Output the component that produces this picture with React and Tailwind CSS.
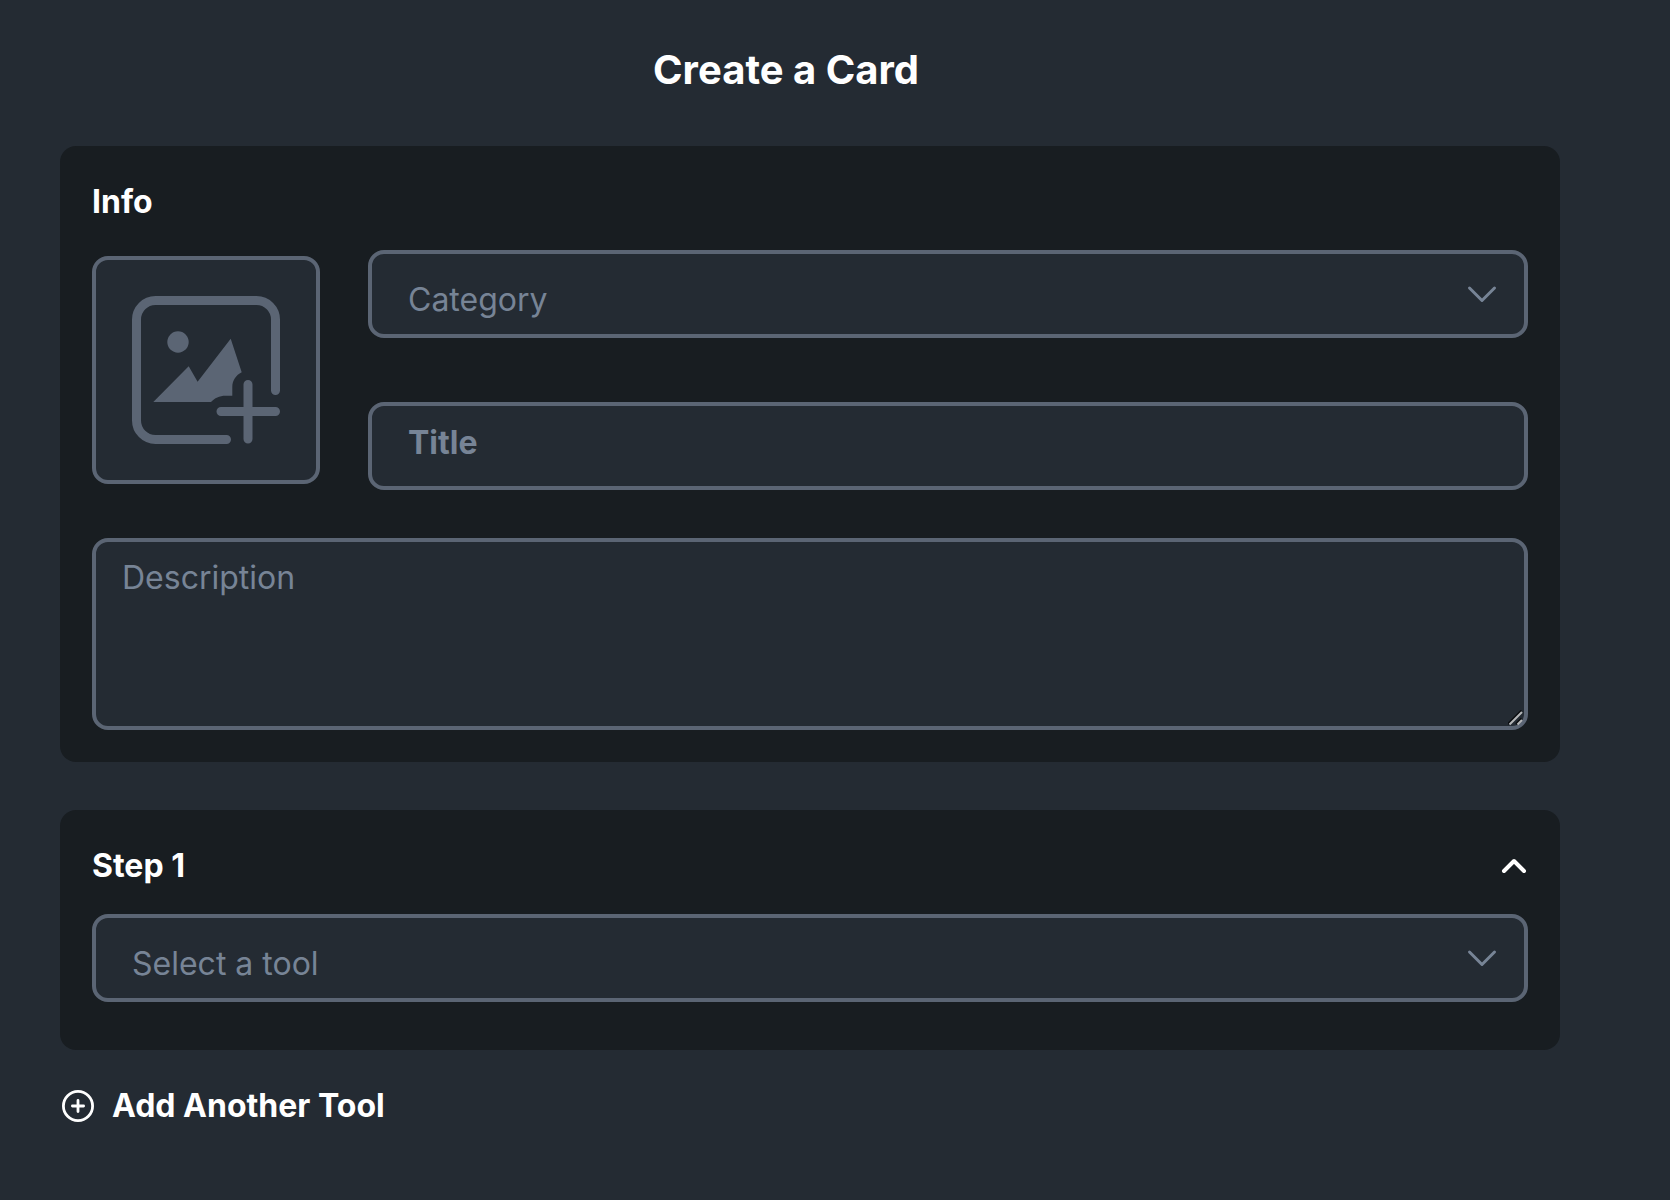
import { useState } from 'react';

const fieldStyle = 'w-full h-[88px] rounded-2xl border-4 border-[#5b6574] bg-[#242b33] text-[32px] text-[#778496] outline-none';

function ImageAddIcon() {
  return (
    <svg viewBox="0 0 148 148" className="w-[148px] h-[148px]" fill="none" stroke="#5b6574" strokeWidth="9" strokeLinecap="round" aria-hidden="true">
      <path d="M94.5 143.5H23.5a19 19 0 0 1-19-19V23.5a19 19 0 0 1 19-19h101a19 19 0 0 1 19 19V94.5" />
      <path d="M116 88.5v54.5M89 115.5h54.5" />
      <circle cx="46" cy="46" r="10.7" fill="#5b6574" stroke="none" />
      <path d="M21.3 106 56.7 70.3 65.6 85.7 98.7 42.7 109.7 76.3C104 79 100.3 84.5 100.3 91V99.7H93.5C87.5 99.7 82.5 102 79 106Z" fill="#5b6574" stroke="none" />
    </svg>
  );
}

function SelectField({ label, options }) {
  const [value, setValue] = useState('');

  return (
    <div className="relative">
      <select
        aria-label={label}
        value={value}
        onChange={e => setValue(e.target.value)}
        className={`${fieldStyle} appearance-none pl-9 pr-20 pt-3`}
      >
        <option value="">{label}</option>
        {options.map(o => <option key={o} value={o}>{o}</option>)}
      </select>
      <svg viewBox="0 0 32 32" className="absolute right-[30px] top-7 w-8 h-8 pointer-events-none" fill="none" stroke="#778496" strokeWidth="3" strokeLinecap="round" strokeLinejoin="round" aria-hidden="true">
        <path d="M3.5 10 16 22.5 28.5 10" />
      </svg>
    </div>
  );
}

export default function App() {
  const [open, setOpen] = useState(true);
  const [steps, setSteps] = useState(1);

  return (
    <div className="min-h-screen bg-[#242b33] pl-[60px] pr-[110px] pt-[46px] pb-16 font-['Inter',sans-serif] text-white">
      <h1 className="pr-12 mb-[52px] text-center text-[40px] leading-12 font-bold">Create a Card</h1>

      <section className="mb-12 rounded-2xl bg-[#181d21] p-8">
        <h2 className="mb-6 text-[32px] leading-12 font-bold">Info</h2>
        <div className="mb-12 flex items-center gap-12">
          <button type="button" aria-label="Add image" className="flex w-[228px] h-[228px] shrink-0 items-center justify-center rounded-2xl border-4 border-[#5b6574] bg-[#242b33]">
            <ImageAddIcon />
          </button>
          <div className="flex flex-1 flex-col gap-16">
            <SelectField label="Category" options={['Writing', 'Design', 'Coding']} />
            <input type="text" aria-label="Title" placeholder="Title" className={`${fieldStyle} px-9 pt-3 pb-5 font-bold placeholder:text-[#778496]`} />
          </div>
        </div>
        <div className="relative">
          <textarea
            aria-label="Description"
            placeholder="Description"
            className="block w-full h-48 resize-y rounded-2xl border-4 border-[#5b6574] bg-[#242b33] px-[26px] py-3 text-[32px] leading-12 outline-none placeholder:text-[#778496] [&::-webkit-resizer]:bg-transparent"
          />
          {/* larger grip over the native resize corner */}
          <svg viewBox="0 0 16 16" className="absolute right-1 bottom-1 w-4 h-4 pointer-events-none" fill="none" aria-hidden="true">
            <path d="M0 14 13.5 0.5M8 14 13.5 8.5" stroke="#0b0d10" strokeWidth="2" />
            <path d="M1.5 14.5 14 2M9.5 14.5 14 10" stroke="#b4b6b8" strokeWidth="2" />
          </svg>
        </div>
      </section>

      <div className="flex flex-col gap-12">
        {Array.from({ length: steps }, (_, i) => (
          <section key={i} className="rounded-2xl bg-[#181d21] px-8 pt-8 pb-12">
            <div className="mb-6 flex items-center justify-between">
              <h2 className="text-[32px] leading-12 font-bold">Step {i + 1}</h2>
              <button type="button" aria-label="Toggle step" onClick={() => setOpen(!open)}>
                <svg viewBox="0 0 28 28" className="w-7 h-7" fill="none" stroke="currentColor" strokeWidth="4" strokeLinecap="round" strokeLinejoin="round" aria-hidden="true">
                  <path d={open ? 'M4 19 14 9 24 19' : 'M4 9 14 19 24 9'} />
                </svg>
              </button>
            </div>
            {open && <SelectField label="Select a tool" options={['ChatGPT', 'Midjourney', 'Figma']} />}
          </section>
        ))}
      </div>

      <button type="button" onClick={() => setSteps(steps + 1)} className="mt-8 flex items-center gap-4 text-[32px] leading-12 font-bold">
        <svg viewBox="0 0 36 36" className="w-9 h-9" fill="none" stroke="currentColor" strokeWidth="2.8" strokeLinecap="round" aria-hidden="true">
          <circle cx="18" cy="18" r="14.6" />
          <path d="M18 12.4v11.2M12.4 18h11.2" />
        </svg>
        Add Another Tool
      </button>
    </div>
  );
}
